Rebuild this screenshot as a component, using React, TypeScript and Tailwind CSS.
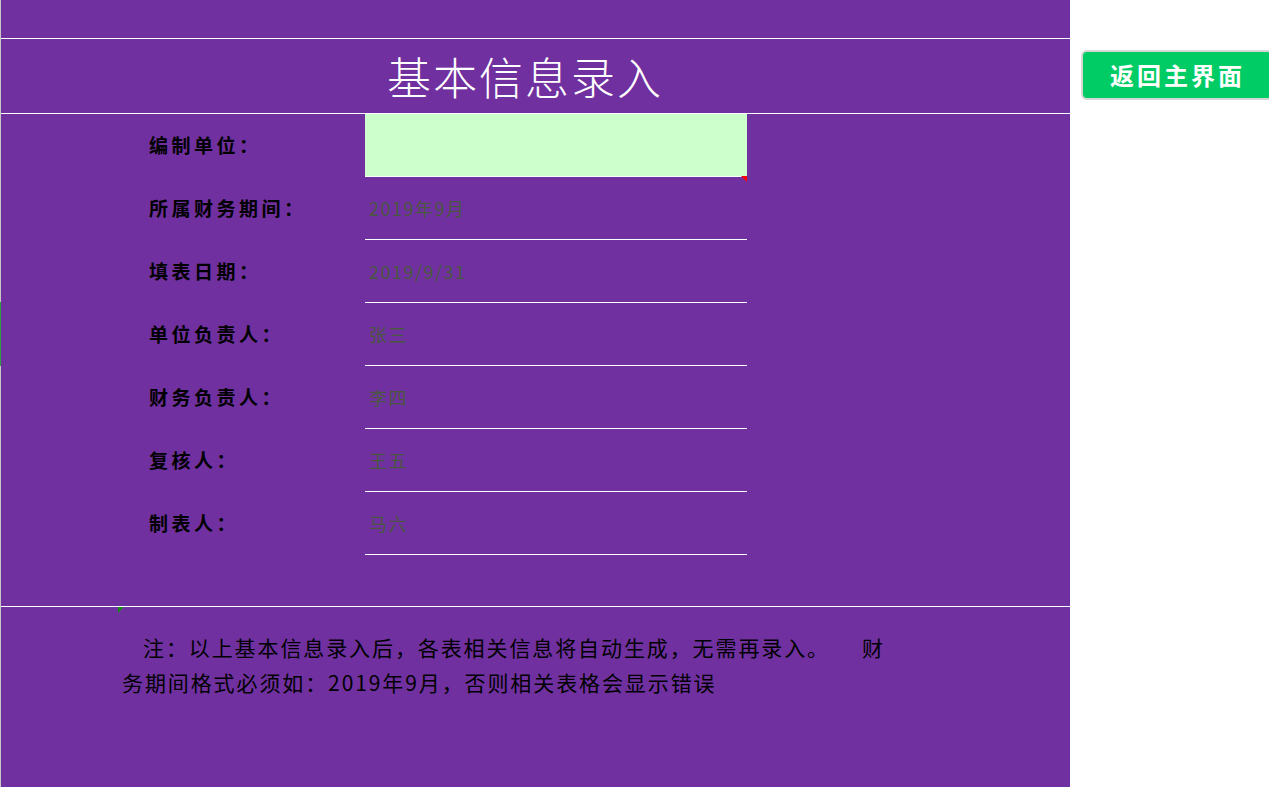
const rows = [
  { label: '编制单位：', value: '', highlight: true },
  { label: '所属财务期间：', value: '2019年9月' },
  { label: '填表日期：', value: '2019/9/31' },
  { label: '单位负责人：', value: '张三' },
  { label: '财务负责人：', value: '李四' },
  { label: '复核人：', value: '王五' },
  { label: '制表人：', value: '马六' },
];

const cjk = { fontFamily: '"Noto Sans CJK SC", "Noto Sans", sans-serif' };

export default function App() {
  return (
    <div className="flex h-[787px] w-[1269px] overflow-hidden bg-white" style={cjk}>
      {/* sheet edge */}
      <div className="flex w-px shrink-0 flex-col">
        <div className="h-[302px] bg-[#c8c8c8]" />
        <div className="h-[64px] bg-[#2e9e3e]" />
        <div className="flex-1 bg-[#c8c8c8]" />
      </div>

      {/* Purple sheet */}
      <div className="flex w-[1069px] shrink-0 flex-col bg-[#7030a0]">
        <div className="h-[38px]" />

        {/* Title */}
        <div className="flex h-[76px] items-center border-y border-white pl-[386px]">
          <h1 className="text-[44px] font-light leading-none tracking-[2px] text-white">基本信息录入</h1>
        </div>

        {/* Form rows */}
        <div className="flex h-[492px] flex-col">
          {rows.map((row) => (
            <div key={row.label} className="flex h-[63px]">
              <div className="flex w-[364px] items-center pl-[148px] text-[19px] font-bold tracking-[3.5px] text-black">
                {row.label}
              </div>
              <div
                className={`relative flex w-[382px] items-center border-b border-white pl-1 text-[18px] tracking-[1.5px] text-[#4b5842] ${
                  row.highlight ? 'bg-[#ccffcc]' : ''
                }`}
              >
                {row.value}
                {row.highlight && (
                  <span className="absolute -bottom-[6px] right-0 h-0 w-0 border-l-[6px] border-t-[6px] border-l-transparent border-t-[#ff0000]" />
                )}
              </div>
            </div>
          ))}
        </div>

        {/* Note */}
        <div className="relative flex-1 border-t border-white pt-[23px] pl-[121px] text-[21px] leading-[35px] tracking-[1.9px] text-black">
          <span className="absolute left-[117px] top-0 h-0 w-0 border-r-[6px] border-t-[6px] border-r-transparent border-t-[#1a8a1a]" />
          <div className="flex whitespace-pre pl-[21px]">
            <span>注：以上基本信息录入后，各表相关信息将自动生成，无需再录入。</span>
            <span className="pl-[32px]">财</span>
          </div>
          <div className="whitespace-pre">务期间格式必须如：2019年9月，否则相关表格会显示错误</div>
        </div>
      </div>

      {/* Right side */}
      <div className="min-w-0 flex-1 pl-[11px] pt-[50px]">
        <button className="flex h-[50px] w-[192px] shrink-0 items-center rounded-[6px] border-2 border-[#d6d6d6] bg-[#00cc66] pl-[27px] text-[24px] font-bold tracking-[3px] text-white">
          返回主界面
        </button>
      </div>
    </div>
  );
}
